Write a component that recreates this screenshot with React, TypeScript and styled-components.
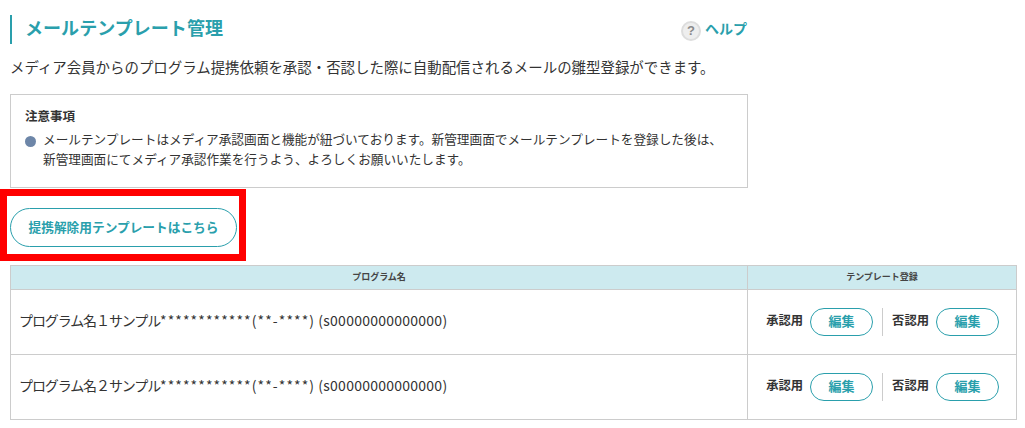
import React from "react";
import styled, { createGlobalStyle } from "styled-components";

const Global = createGlobalStyle`
  html, body { margin: 0; padding: 0; background: #fff; }
  body { font-family: "Noto Sans CJK JP", "Liberation Sans", sans-serif; color: #333; overflow: hidden; }
`;

const Page = styled.div`
  width: 1025px; height: 428px; box-sizing: border-box; padding: 15px 8px 0 10px; overflow: hidden;
`;
const Top = styled.div`
  width: 738px; display: flex; flex-direction: column;
`;
const TitleRow = styled.div`
  display: flex; align-items: center; justify-content: space-between; height: 29px;
`;
const Title = styled.h1`
  margin: 0; height: 29px; line-height: 25px; border-left: 2px solid #2a9fac; padding-left: 13px;
  font-size: 18px; font-weight: 700; color: #2a9fac; letter-spacing: 0.05px;
`;
const Help = styled.a`
  display: flex; align-items: center; gap: 4px; margin-right: 1px; margin-top: 2px;
  font-size: 14px; font-weight: 700; line-height: 20px; color: #2a9fac;
`;
const HelpLabel = styled.span`
  padding-bottom: 5px;
`;
const HelpIcon = styled.span`
  width: 20px; height: 20px; box-sizing: border-box; border-radius: 50%; background: #eee; border: 2px solid #ddd;
  display: flex; align-items: center; justify-content: center; font: bold 13px "Liberation Sans", sans-serif; color: #8a8a8a;
`;
const Lead = styled.p`
  margin: 13px 0 0; padding-bottom: 1px; font-size: 14.45px; line-height: 20px; white-space: nowrap;
`;
const Notice = styled.section`
  margin-top: 16px; height: 94px; box-sizing: border-box; border: 1px solid #ccc; padding: 13px 14px;
`;
const NoticeTitle = styled.div`
  font-size: 12.5px; font-weight: 700; line-height: 16px;
`;
const NoticeItem = styled.div`
  display: flex; margin-top: 5px; font-size: 12.65px; line-height: 20px; white-space: nowrap;
`;
const Bullet = styled.span`
  flex: none; width: 11px; height: 11px; border-radius: 50%; background: #6d86a8; margin: 7px 7px 0 0;
`;
const ButtonRow = styled.div`
  position: relative; margin-top: 20px; height: 39px;
`;
const Highlight = styled.div`
  position: absolute; left: -10px; top: -19px; width: 246px; height: 72px; box-sizing: border-box;
  border: 7px solid #f00; pointer-events: none;
`;
const Pill = styled.button<{ $w: number; $h: number; $size: number }>`
  width: ${p => p.$w}px; height: ${p => p.$h}px; padding: 0 0 3px; flex: none; background: #fff;
  border: 1px solid #2a9fac; border-radius: ${p => p.$h / 2}px; color: #2a9fac;
  font-family: inherit; font-size: ${p => p.$size}px; font-weight: 700; white-space: nowrap;
`;
const Table = styled.table`
  margin-top: 18px; width: 1007px; border-collapse: collapse; table-layout: fixed;
`;
const Th = styled.th`
  height: 24px; padding: 0 0 3px; box-sizing: border-box; background: #cdeaef; border: 1px solid #ccc;
  font-size: 9px; font-weight: 700; color: #444;
`;
const Td = styled.td`
  height: 64px; padding: 0 8px; border: 1px solid #ccc; font-size: 14px; white-space: nowrap; overflow: hidden;
`;
const RowText = styled.div`
  padding-bottom: 4px;
`;
const Segment = styled.span<{ $track: number }>`
  letter-spacing: ${p => p.$track}px;
`;
const Actions = styled.div`
  display: flex; align-items: center; justify-content: flex-end; padding-right: 9px;
`;
const ActionLabel = styled.span`
  font-size: 12.3px; font-weight: 700; margin-right: 7px; padding-bottom: 4px;
`;
const Divider = styled.span`
  width: 1px; height: 28px; background: #ccc; margin: 0 9px;
`;

const rows = ["プログラム名１サンプル", "プログラム名２サンプル"];

export default function App() {
  return (
    <Page>
      <Global />
      <Top>
        <TitleRow>
          <Title>メールテンプレート管理</Title>
          <Help><HelpIcon>?</HelpIcon><HelpLabel>ヘルプ</HelpLabel></Help>
        </TitleRow>
        <Lead>メディア会員からのプログラム提携依頼を承認・否認した際に自動配信されるメールの雛型登録ができます。</Lead>
        <Notice>
          <NoticeTitle>注意事項</NoticeTitle>
          <NoticeItem>
            <Bullet />
            <div>メールテンプレートはメディア承認画面と機能が紐づいております。新管理画面でメールテンプレートを登録した後は、<br />新管理画面にてメディア承認作業を行うよう、よろしくお願いいたします。</div>
          </NoticeItem>
        </Notice>
        <ButtonRow>
          <Pill $w={227} $h={39} $size={12.7}>提携解除用テンプレートはこちら</Pill>
          <Highlight />
        </ButtonRow>
      </Top>
      <Table>
        <colgroup><col style={{ width: 737 }} /><col /></colgroup>
        <thead><tr><Th>プログラム名</Th><Th>テンプレート登録</Th></tr></thead>
        <tbody>
          {rows.map(r => (
            <tr key={r}>
              <Td>
                <RowText>
                  <Segment $track={-1.1}>{r}</Segment>
                  <Segment $track={1.1}>************(**-****)</Segment>
                  {" "}<Segment $track={0.25}>(s00000000000000)</Segment>
                </RowText>
              </Td>
              <Td>
                <Actions>
                  <ActionLabel>承認用</ActionLabel>
                  <Pill $w={63} $h={28} $size={13}>編集</Pill>
                  <Divider />
                  <ActionLabel>否認用</ActionLabel>
                  <Pill $w={63} $h={28} $size={13}>編集</Pill>
                </Actions>
              </Td>
            </tr>
          ))}
        </tbody>
      </Table>
    </Page>
  );
}
